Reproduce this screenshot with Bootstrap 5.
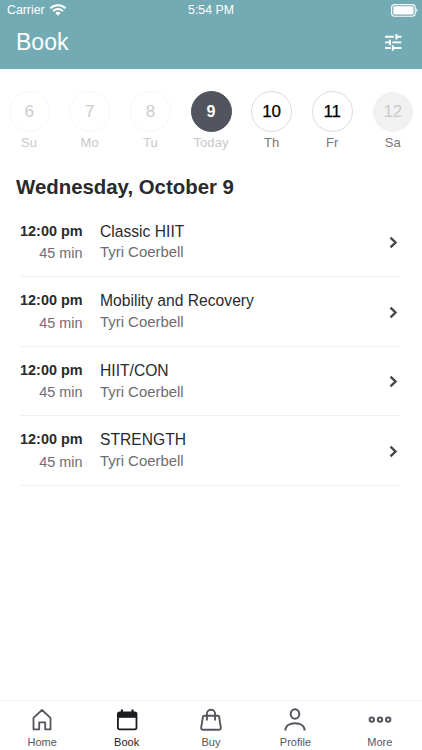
<!DOCTYPE html>
<html lang="en">
<head>
<meta charset="utf-8">
<meta name="viewport" content="width=device-width, initial-scale=1">
<title>Book</title>
<link href="https://cdn.jsdelivr.net/npm/bootstrap@5.3.0/dist/css/bootstrap.min.css" rel="stylesheet">
<style>
  body { font-family: "Liberation Sans", Arial, sans-serif; color: #2a2a2c; background: #fff; line-height: 1; }
  svg { display: block; flex: none; }
  .top-area { background: #73abb4; height: 69px; color: #fff; }
  .status-bar { height: 20px; padding: 0 4px 0 7px; font-size: 12.3px; }
  .status-clock { margin-right: 3px; }
  .title-bar { height: 45px; padding: 0 20px 0 16px; }
  .title-bar h1 { font-size: 23px; }
  .day-strip { margin: 22px -1.2px 0; }
  .day { font-size: 13px; letter-spacing: .1px; color: #77777b; }
  .day-number { width: 41px; height: 41px; border: 1px solid #dcdcdc; color: #000; font-size: 17px; letter-spacing: 0; margin-bottom: 4px; }
  .day.past { color: #c8c8ca; }
  .day.past .day-number { border-color: #f6f6f6; color: #cbcbcb; }
  .day.today { color: #c8c8ca; }
  .day.today .day-number { background: #52545e; border-color: #52545e; color: #fff; font-weight: 700; font-size: 16px; }
  .day.upcoming .day-number { -webkit-text-stroke: .25px #000; }
  .day.closed .day-number { background: #f1f1f1; border-color: #f1f1f1; color: #cbcbcb; width: 40px; height: 40px; margin: .5px 0 4.5px; }
  .date-title { font-size: 20.4px; margin: 25.7px 0 0 16px; line-height: 24px; }
  .class-list { margin: 8.8px 22px 0 20px; }
  .class-row { height: 69.6px; border-bottom: 1px solid #f1f1f1; padding-top: 16.2px; }
  .class-time { width: 62.5px; font-size: 14.4px; }
  .class-name { font-size: 15.65px; }
  .muted { color: #6d6d74; }
  .class-time .muted { margin-top: 8.2px; }
  .class-info { margin-left: 17.5px; }
  .class-info .muted { font-size: 14.9px; margin-top: 6px; }
  .chevron { margin: 12.4px 1.6px 0 0; }
  .tab-bar { height: 50px; border-top: 1px solid #f4f4f4; }
  .tab { flex: 1 1 0; color: #55555d; font-size: 11px; padding-top: 6px; }
  .tab.current { color: #1c1c20; }
  .tab span { margin-top: 6px; }
</style>
<script src="https://cdn.jsdelivr.net/npm/bootstrap@5.3.0/dist/js/bootstrap.bundle.min.js"></script>
</head>
<body class="vh-100 d-flex flex-column overflow-hidden">
<header class="top-area">
  <div class="status-bar d-flex align-items-center justify-content-between">
    <div class="d-flex align-items-center col">
      <span>Carrier</span>
      <svg class="ms-1" width="18" height="12" viewBox="-.5 0 18 12" fill="none" stroke="#fff" stroke-width="2"><path d="M.9 4.3a11 11 0 0 1 15.2 0M3.6 7.1a7 7 0 0 1 9.8 0"/><path d="M8.5 11.7 5.9 9a3.7 3.7 0 0 1 5.2 0z" fill="#fff" stroke="none"/></svg>
    </div>
    <span class="status-clock">5:54 PM</span>
    <div class="col d-flex justify-content-end">
      <svg width="27" height="13" viewBox="0 0 27 13"><rect x=".6" y=".6" width="23.6" height="11.6" rx="3" fill="none" stroke="#fff" stroke-width="1.1"/><rect x="2.3" y="2.3" width="20.2" height="8.2" rx="1.3" fill="#fff"/><path d="M25.4 4.3c1.5.7 1.5 3.5 0 4.2z" fill="#fff"/></svg>
    </div>
  </div>
  <div class="title-bar d-flex align-items-center justify-content-between">
    <h1 class="m-0 fw-normal">Book</h1>
    <svg width="17" height="17" viewBox="0 0 17 17" fill="none" stroke="#fff" stroke-width="1.9"><path d="M0 2.8h9M11.4 0v5.6M11.4 2.8h5M0 8.4h5M5 5.7v5.5M7.3 8.4h9.1M0 14h5.6M7.8 11.2v5.6M7.8 14h8.6"/></svg>
  </div>
</header>

<main class="flex-grow-1">
  <div class="day-strip d-flex text-center">
    <div class="day past col d-flex flex-column align-items-center"><div class="day-number rounded-circle d-flex align-items-center justify-content-center">6</div>Su</div>
    <div class="day past col d-flex flex-column align-items-center"><div class="day-number rounded-circle d-flex align-items-center justify-content-center">7</div>Mo</div>
    <div class="day past col d-flex flex-column align-items-center"><div class="day-number rounded-circle d-flex align-items-center justify-content-center">8</div>Tu</div>
    <div class="day today col d-flex flex-column align-items-center"><div class="day-number rounded-circle d-flex align-items-center justify-content-center">9</div>Today</div>
    <div class="day upcoming col d-flex flex-column align-items-center"><div class="day-number rounded-circle d-flex align-items-center justify-content-center">10</div>Th</div>
    <div class="day upcoming col d-flex flex-column align-items-center"><div class="day-number rounded-circle d-flex align-items-center justify-content-center">11</div>Fr</div>
    <div class="day closed col d-flex flex-column align-items-center"><div class="day-number rounded-circle d-flex align-items-center justify-content-center">12</div>Sa</div>
  </div>

  <h2 class="date-title fw-bold">Wednesday, October 9</h2>

  <div class="class-list">
    <div class="class-row d-flex">
      <div class="class-time text-end text-nowrap"><div class="fw-bold">12:00 pm</div><div class="muted">45 min</div></div>
      <div class="class-info flex-grow-1"><div class="class-name">Classic HIIT</div><div class="muted">Tyri Coerbell</div></div>
      <svg class="chevron" width="9" height="13" viewBox="0 0 9 13" fill="none" stroke="#47474a" stroke-width="2.4"><path d="m1.5 1.7 5 4.8-5 4.8"/></svg>
    </div>
    <div class="class-row d-flex">
      <div class="class-time text-end text-nowrap"><div class="fw-bold">12:00 pm</div><div class="muted">45 min</div></div>
      <div class="class-info flex-grow-1"><div class="class-name">Mobility and Recovery</div><div class="muted">Tyri Coerbell</div></div>
      <svg class="chevron" width="9" height="13" viewBox="0 0 9 13" fill="none" stroke="#47474a" stroke-width="2.4"><path d="m1.5 1.7 5 4.8-5 4.8"/></svg>
    </div>
    <div class="class-row d-flex">
      <div class="class-time text-end text-nowrap"><div class="fw-bold">12:00 pm</div><div class="muted">45 min</div></div>
      <div class="class-info flex-grow-1"><div class="class-name">HIIT/CON</div><div class="muted">Tyri Coerbell</div></div>
      <svg class="chevron" width="9" height="13" viewBox="0 0 9 13" fill="none" stroke="#47474a" stroke-width="2.4"><path d="m1.5 1.7 5 4.8-5 4.8"/></svg>
    </div>
    <div class="class-row d-flex">
      <div class="class-time text-end text-nowrap"><div class="fw-bold">12:00 pm</div><div class="muted">45 min</div></div>
      <div class="class-info flex-grow-1"><div class="class-name">STRENGTH</div><div class="muted">Tyri Coerbell</div></div>
      <svg class="chevron" width="9" height="13" viewBox="0 0 9 13" fill="none" stroke="#47474a" stroke-width="2.4"><path d="m1.5 1.7 5 4.8-5 4.8"/></svg>
    </div>
  </div>
</main>

<nav class="tab-bar d-flex">
  <a class="tab d-flex flex-column align-items-center text-decoration-none" href="#">
    <svg width="24" height="24" viewBox="0 0 24 24" fill="none" stroke="currentColor" stroke-width="1.8" stroke-linejoin="round"><path d="M3.5 10.8 12 3l8.5 7.8v11.6h-5.3v-7H9.2v7H3.5z"/></svg>
    <span>Home</span></a>
  <a class="tab current d-flex flex-column align-items-center text-decoration-none" href="#">
    <svg width="24" height="24" viewBox="0 0 24 24" fill="none" stroke="currentColor" stroke-width="1.8"><rect x="2.9" y="5.3" width="18.6" height="17" rx="1.8"/><path d="M2.8 5.6h18.6v5.2H2.8z" fill="currentColor" stroke="none"/><path d="M6.9 2.4v4M17.5 2.4v4" stroke-width="2.2"/></svg>
    <span>Book</span></a>
  <a class="tab d-flex flex-column align-items-center text-decoration-none" href="#">
    <svg width="24" height="24" viewBox="0 0 24 24" fill="none" stroke="currentColor" stroke-width="1.9" stroke-linejoin="round"><path d="M5.2 8.8h13.6q1.1 0 1.3 1l1.7 10.6q.2 2.4-1.8 2.4H4q-2 0-1.8-2.4L3.9 9.8q.2-1 1.3-1z"/><path d="M7.9 13.4V6.8a4.1 4.1 0 0 1 8.2 0v6.6"/></svg>
    <span>Buy</span></a>
  <a class="tab d-flex flex-column align-items-center text-decoration-none" href="#">
    <svg width="24" height="24" viewBox="0 0 24 24" fill="none" stroke="currentColor" stroke-width="2"><ellipse cx="12" cy="7" rx="4.3" ry="4.8"/><path d="M2.3 23.5c.2-4.6 4.4-7.2 9.7-7.2s9.5 2.6 9.7 7.2"/></svg>
    <span>Profile</span></a>
  <a class="tab d-flex flex-column align-items-center text-decoration-none" href="#">
    <svg width="24" height="24" viewBox="0 0 24 24" fill="none" stroke="currentColor" stroke-width="2"><circle cx="3.8" cy="12.6" r="2.2"/><circle cx="12" cy="12.6" r="2.2"/><circle cx="20.2" cy="12.6" r="2.2"/></svg>
    <span>More</span></a>
</nav>
</body>
</html>
